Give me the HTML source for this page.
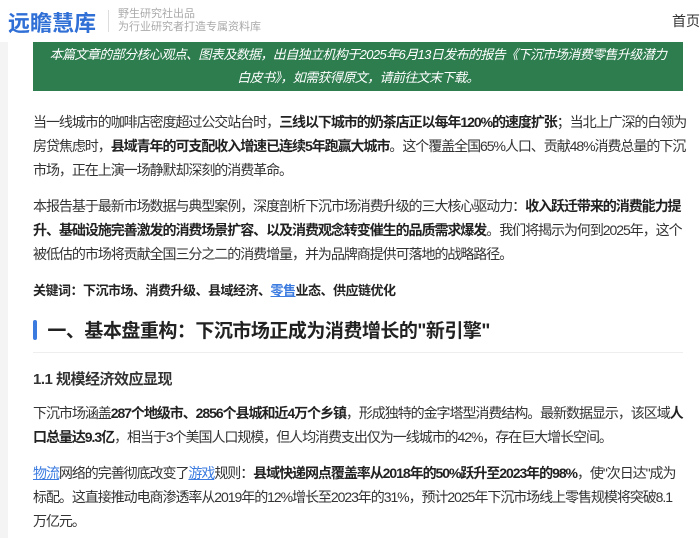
<!DOCTYPE html>
<html><head><meta charset="utf-8"><style>
body{margin:0;width:700px;height:538px;overflow:hidden;background:#fff;font-family:"Liberation Sans","Noto Sans CJK SC",sans-serif;color:#333;}
.hdr{position:absolute;left:0;top:0;width:700px;height:40px;background:#fff;}
.logo{position:absolute;left:8px;top:6px;font-size:22px;font-weight:bold;color:#2f6fd6;}
.sep{position:absolute;left:108px;top:10px;width:1px;height:22px;background:#ddd;}
.sub{position:absolute;left:118px;top:8px;font-size:11px;line-height:13px;color:#aaa;}
.nav{position:absolute;left:672px;top:11px;font-size:14px;color:#333;white-space:nowrap;}
.strip{position:absolute;left:0;top:42px;width:8px;height:496px;background:#f4f4f4;}
.banner{position:absolute;left:33px;top:42px;width:650px;height:48px;background:#2e7d4f;color:#fff;font-size:13px;font-style:italic;text-align:center;line-height:23px;padding-top:1px;letter-spacing:-0.6px;white-space:nowrap;}
.p{position:absolute;left:33px;font-size:14px;line-height:24px;white-space:nowrap;color:#333;letter-spacing:-1.05px;}
b{color:#222;}
a{color:#3b7be0;text-decoration:underline;}
.h1{position:absolute;left:33px;top:316px;font-size:19px;font-weight:bold;color:#222;white-space:nowrap;letter-spacing:-0.5px;}
.bar{position:absolute;left:33px;top:320px;width:4px;height:20px;background:#3b7be0;border-radius:2px;}
.line{position:absolute;left:33px;top:352px;width:650px;height:1px;background:#eee;}
.h2{position:absolute;left:33px;top:368px;font-size:15px;font-weight:bold;color:#333;letter-spacing:-0.5px;}
</style></head><body>
<div class="hdr">
<div class="logo">远瞻慧库</div><div class="sep"></div>
<div class="sub">野生研究社出品<br>为行业研究者打造专属资料库</div>
<div class="nav">首页</div>
</div>
<div class="strip"></div>
<div class="banner">本篇文章的部分核心观点、图表及数据，出自独立机构于2025年6月13日发布的报告《下沉市场消费零售升级潜力<br>白皮书》，如需获得原文，请前往文末下载。</div>
<div class="p" style="top:110px">当一线城市的咖啡店密度超过公交站台时，<b>三线以下城市的奶茶店正以每年120%的速度扩张</b>；当北上广深的白领为<br>房贷焦虑时，<b>县域青年的可支配收入增速已连续5年跑赢大城市</b>。这个覆盖全国65%人口、贡献48%消费总量的下沉<br>市场，正在上演一场静默却深刻的消费革命。</div>
<div class="p" style="top:194px">本报告基于最新市场数据与典型案例，深度剖析下沉市场消费升级的三大核心驱动力：<b>收入跃迁带来的消费能力提<br>升、基础设施完善激发的消费场景扩容、以及消费观念转变催生的品质需求爆发</b>。我们将揭示为何到2025年，这个<br>被低估的市场将贡献全国三分之二的消费增量，并为品牌商提供可落地的战略路径。</div>
<div class="p" style="top:279px;font-size:13px;letter-spacing:-0.5px"><b>关键词：下沉市场、消费升级、县域经济、<a>零售</a>业态、供应链优化</b></div>
<div class="bar"></div>
<div class="h1">&nbsp;&nbsp;&nbsp;一、基本盘重构：下沉市场正成为消费增长的"新引擎"</div>
<div class="line"></div>
<div class="h2">1.1 规模经济效应显现</div>
<div class="p" style="top:401px">下沉市场涵盖<b>287个地级市、2856个县城和近4万个乡镇</b>，形成独特的金字塔型消费结构。最新数据显示，该区域<b>人<br>口总量达9.3亿</b>，相当于3个美国人口规模，但人均消费支出仅为一线城市的42%，存在巨大增长空间。</div>
<div class="p" style="top:461px"><a>物流</a>网络的完善彻底改变了<a>游戏</a>规则：<b>县域快递网点覆盖率从2018年的50%跃升至2023年的98%</b>，使"次日达"成为<br>标配。这直接推动电商渗透率从2019年的12%增长至2023年的31%，预计2025年下沉市场线上零售规模将突破8.1<br>万亿元。</div>
</body></html>
